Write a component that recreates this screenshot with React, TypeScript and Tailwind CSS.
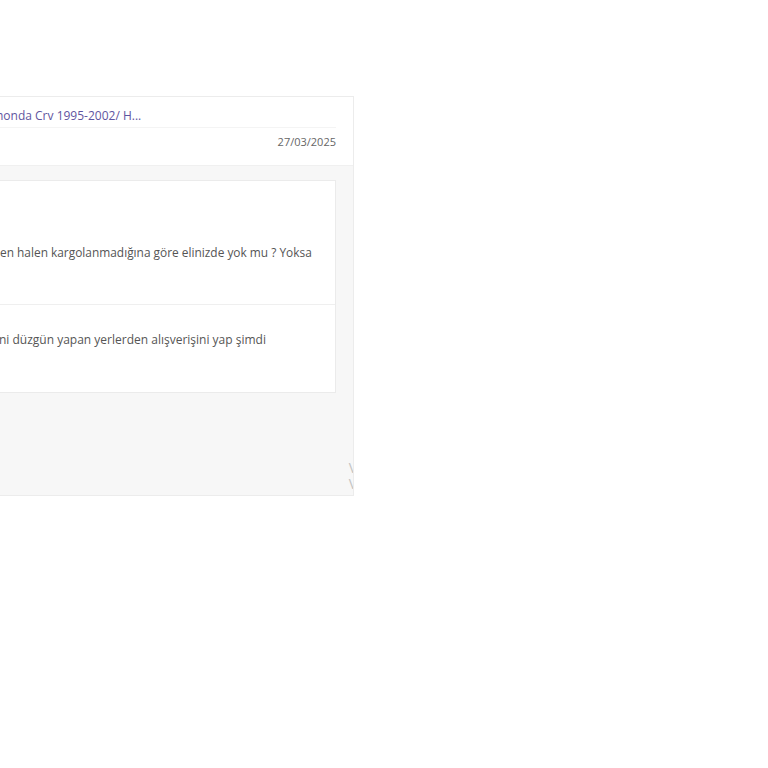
export default function App() {
  return (
    <div className="h-[768px] w-[768px] overflow-hidden bg-white pt-[96px] font-['Open_Sans',sans-serif]">
      {/* card runs off the left side of the page */}
      <div className="relative -ml-[20px] flex h-[400px] w-[374px] flex-col overflow-hidden border border-[#ececec] bg-[#f7f7f7]">
        <div className="h-[69px] shrink-0 border-b border-[#f0f0f0] bg-white pl-[15px] pr-[17px]">
          <div className="flex h-[31px] items-center whitespace-nowrap border-b border-[#f4f4f4] pt-[7px] text-[12px] text-[#5f55a0]">
            honda Crv 1995-2002/ H...
          </div>
          <div className="pt-[6px] text-right text-[11px] leading-[15px] text-[#666666]">27/03/2025</div>
        </div>
        <div className="mr-[17px] mt-[14px] h-[213px] shrink-0 border border-[#ebebeb] bg-white">
          <div className="h-[124px] border-b border-[#efefef] pl-[18px] pt-[63px] whitespace-nowrap text-[11.9px] text-[#555555]">
            en halen kargolanmadığına göre elinizde yok mu ? Yoksa
          </div>
          <div className="pl-[17px] pt-[26px] whitespace-nowrap text-[12px] text-[#555555]">
            ni düzgün yapan yerlerden alışverişini yap şimdi
          </div>
        </div>
        <div className="mt-[67px] flex flex-col items-end text-[14px] leading-[16px] text-[#c4c4c4]">
          <span className="-mr-[4px]">V</span>
          <span className="-mr-[4px]">V</span>
        </div>
      </div>
    </div>
  )
}
